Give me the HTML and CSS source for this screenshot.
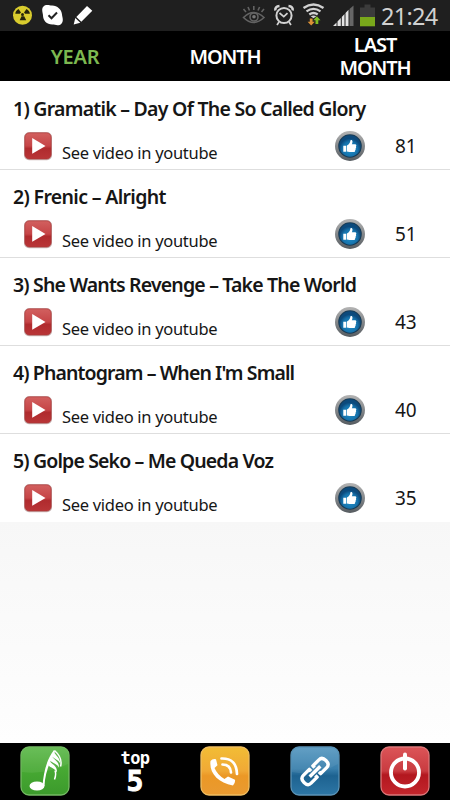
FILE: index.html
```
<!DOCTYPE html>
<html lang="en">
<head>
<meta charset="utf-8">
<title>Top 5</title>
<link rel="stylesheet" href="styles.css">
</head>
<body>
<svg class="defs" width="0" height="0" aria-hidden="true">
  <defs>
    <linearGradient id="red" x2="0" y2="1"><stop offset="0" stop-color="#dc5558"/><stop offset=".5" stop-color="#c93b40"/><stop offset=".58" stop-color="#b3171f"/><stop offset="1" stop-color="#c3262c"/></linearGradient>
    <linearGradient id="play" x2="0" y2="1"><stop offset="0" stop-color="#d2605f"/><stop offset=".5" stop-color="#c64547"/><stop offset=".6" stop-color="#b02b2e"/><stop offset="1" stop-color="#b93537"/></linearGradient>
    <linearGradient id="green" x2="0" y2="1"><stop offset="0" stop-color="#5fb94c"/><stop offset=".5" stop-color="#46a832"/><stop offset="1" stop-color="#3c9a2c"/></linearGradient>
    <linearGradient id="gold" x2="0" y2="1"><stop offset="0" stop-color="#f2bd35"/><stop offset=".5" stop-color="#f0a936"/><stop offset=".6" stop-color="#eb9826"/><stop offset="1" stop-color="#e99a31"/></linearGradient>
    <linearGradient id="blue" x2="0" y2="1"><stop offset="0" stop-color="#5799c1"/><stop offset=".45" stop-color="#397fac"/><stop offset=".6" stop-color="#1d6290"/><stop offset="1" stop-color="#2d76a5"/></linearGradient>
    <linearGradient id="ring" x2="0" y2="1"><stop offset="0" stop-color="#b4b4b4"/><stop offset="1" stop-color="#555b60"/></linearGradient>
    <radialGradient id="disc" cy=".65"><stop offset="0" stop-color="#2090cb"/><stop offset=".7" stop-color="#1672ab"/><stop offset="1" stop-color="#0c4a7c"/></radialGradient>
    <symbol id="i-play" viewBox="0 0 30 30">
      <rect x="1" y="1.2" width="28" height="28" rx="5" fill="#b8a09f" opacity=".75"/>
      <rect x="1.8" y="1.8" width="26.4" height="26.2" rx="4.5" fill="url(#play)" stroke="#a93a3a" stroke-width=".7"/>
      <path d="M9.2 7v15.8L22.5 15z" fill="#fff"/>
    </symbol>
    <symbol id="i-like" viewBox="0 0 30 30">
      <circle cx="15" cy="15" r="15" fill="url(#ring)"/>
      <circle cx="15" cy="15" r="11.8" fill="#173b55"/>
      <circle cx="15" cy="15" r="10.700" fill="url(#disc)"/>
      <path d="M8.300 14.800h2.900v6H8.300zM11.900 14.600c2-1.100 3.200-2.600 3.500-5.100.8-.9 2.200-.2 2.100 1.200 0 1-.4 1.900-.7 2.600h3.200c1.700.2 1.500 1.700.9 2.200.5.7.3 1.600-.3 2 .3.800 0 1.500-.5 1.900.1 1-.5 1.500-1.500 1.500h-4.200l-2.500-.5z" fill="#fff"/>
    </symbol>
  </defs>
</svg>
<div class="screen">
  <header class="status">
    <svg class="status-left" width="100" height="31" viewBox="0 0 100 31">
      <circle cx="22.500" cy="15.200" r="9.500" fill="#d9cc2e"/>
      <g fill="#25240c"><circle cx="22.500" cy="14.500" r="1.500"/><path d="M21 12.500l-2.500-3.500c-2 1-3 2.700-3.200 4.800h4.500zM24 12.500l2.500-3.500c2 1 3.200 2.700 3.400 4.800h-4.800zM21.500 16.200l-1.800 4h6.500l-2-4z"/></g>
      <path d="M42.200 10c0-3 2-5 5-5 2.200 0 2.700.5 5 .5 5 0 9.500 4 9.800 9 .1 2 .8 3 .8 5.300 0 3.500-2 5.500-5.300 5.500-2 0-3-.7-5.200-.7-5.500 0-9.300-4-9.300-9 0-2-.8-3.400-.8-5.600z" fill="#fff"/>
      <path d="M48.500 15.200l3 3 5.500-5.700" fill="none" stroke="#222" stroke-width="2"/>
      <path d="M87 6l5.300 4.800-11 11-5-4.800zM75.300 18l5 4.700-6.600 1.900z" fill="#fff"/>
    </svg>
    <svg class="status-right" width="140" height="31" viewBox="240 0 140 31">
      <g fill="none" stroke="#636363" stroke-width="1.600"><path d="M243.500 17.500q10-10 20.500 0-10.500 10-20.500 0z"/><circle cx="254" cy="17" r="4"/><path d="M253.800 10V6M246 12l-2.500-3M249.500 10.500L248 7M258 10.500l1.600-3.500M261.500 12l2.500-3"/></g>
      <circle cx="254" cy="16.800" r="1.800" fill="#777"/>
      <g fill="none" stroke="#d2d2d2" stroke-width="2"><circle cx="284" cy="15.500" r="7.600"/><path d="M279.500 13l4.300 3.700 3.700-3.500M279 22l-2 3M289 22l2 3" stroke-width="1.700"/><path d="M275.300 10.500q-.5-4 4.200-4.500M292.700 10.500q.5-4-4.200-4.500" stroke-width="2.500"/></g>
      <g fill="none" stroke="#d0d0d0" stroke-width="2.300"><path d="M303.500 8q10-7 20 0M306.500 11.400q7-5 14 0M309.300 14.500q4.200-3 8.400 0"/></g>
      <path d="M310.700 16.200q2.800-1.500 5.600 0l-2.800 2z" fill="#d0d0d0"/>
      <path d="M309.800 18.500v3.200h-2.200l3.600 3.800 3.600-3.800h-2.200v-3.200z" fill="#dc9136"/><path d="M315.500 24v-3.700h-2.200l3.600-4 3.600 4h-2.200V24z" fill="#80bd22"/>
      <path d="M333 26l3.500-3.500V26zM337.500 26v-4.500l3.300-3.500v8zM341.800 26V17l2.700-3v12zM345.500 26V13l3-3.200V26z" fill="#e3e3e3"/><path d="M349.500 26V9l4-3.500V26z" fill="#666"/>
      <path d="M360 7.500h4.500v-3h6v3h4.500V17h-15z" fill="#3b3b3b"/><path d="M360 17h15v9.300h-15z" fill="#79a81b"/>
    </svg>
    <span class="clock">21:24</span>
  </header>
  <nav class="tabs"><span class="tab active">YEAR</span><span class="tab">MONTH</span><span class="tab">LAST<br>MONTH</span></nav>
  <main class="list">
    <section class="row"><h2 class="title t1">1) Gramatik – Day Of The So Called Glory</h2><div class="meta"><svg class="play"><use href="#i-play"/></svg><span class="link">See video in youtube</span><svg class="like"><use href="#i-like"/></svg><span class="votes">81</span></div></section>
    <section class="row"><h2 class="title t2">2) Frenic – Alright</h2><div class="meta"><svg class="play"><use href="#i-play"/></svg><span class="link">See video in youtube</span><svg class="like"><use href="#i-like"/></svg><span class="votes">51</span></div></section>
    <section class="row"><h2 class="title t3">3) She Wants Revenge – Take The World</h2><div class="meta"><svg class="play"><use href="#i-play"/></svg><span class="link">See video in youtube</span><svg class="like"><use href="#i-like"/></svg><span class="votes">43</span></div></section>
    <section class="row"><h2 class="title t4">4) Phantogram – When I'm Small</h2><div class="meta"><svg class="play"><use href="#i-play"/></svg><span class="link">See video in youtube</span><svg class="like"><use href="#i-like"/></svg><span class="votes">40</span></div></section>
    <section class="row"><h2 class="title t5">5) Golpe Seko – Me Queda Voz</h2><div class="meta"><svg class="play"><use href="#i-play"/></svg><span class="link">See video in youtube</span><svg class="like"><use href="#i-like"/></svg><span class="votes">35</span></div></section>
  </main>
  <footer class="dock">
    <svg class="tile" viewBox="0 0 50 50"><rect x="1" y="1" width="48" height="48" rx="8" fill="url(#green)" stroke="#74bb63" stroke-width="1.300"/><path d="M2 26Q26 29 48 18V9q0-7-7-7H9Q2 2 2 9z" fill="#fff" opacity=".07"/><g fill="#fff"><ellipse cx="17" cy="40" rx="7.500" ry="4.500"/><path d="M22.500 40C23.500 28 26 14 34 4l1 1.500C29 17 25 28 24.500 40z"/><path d="M33.800 4.500c0 4 6 6 6.500 13-2-4-6-4.500-8.300-7zM31.500 9.500c1.500 4 7.500 5 7.500 12-2-4-7-4.500-9-7zM29.500 14.500c2 4 8 5 7.500 12-2-4-6.500-5-8.500-7z"/></g><path d="M34.500 4.500Q43 12 40.500 20.500M35 24.500q1.500 4-.5 9" fill="none" stroke="#fff" stroke-width="1.500"/></svg>
    <div class="top5"><span class="top">top</span><span class="five">5</span></div>
    <svg class="tile" viewBox="0 0 50 50"><rect x="1" y="1" width="48" height="48" rx="8" fill="url(#gold)" stroke="#efbd60" stroke-width="1.300"/><path d="M10.500 15q2-2.500 5.500-1.700l1.500 6-3 2.700q3 7 10 11l3.500-2.500 7 3.200q.5 3.500-2 5.800C18 37 9 27 10.500 15z" fill="#fff"/><path d="M21.500 12.500q15-.5 15.500 15.500M22.500 18.500q8 0 8.500 8" fill="none" stroke="#fff" stroke-width="2.700" stroke-linecap="round"/></svg>
    <svg class="tile" viewBox="0 0 50 50"><rect x="1" y="1" width="48" height="48" rx="8" fill="url(#blue)" stroke="#5b93b6" stroke-width="1.300"/><path d="M2 26q24 5 46-8V9q0-7-7-7H9Q2 2 2 9z" fill="#fff" opacity=".07"/><g transform="translate(25 25.500) rotate(-45)" fill="none" stroke="#fff" stroke-width="3.400" stroke-linejoin="round"><path d="M-2.500-3V-5.500H-11q-4.500 0-4.500 5.500t4.500 5.500h8.500V3M2.500-3V-5.500H11q4.500 0 4.500 5.500T11 5.500H2.500V3M-7.500 0H7.500"/></g></svg>
    <svg class="tile" viewBox="0 0 50 50"><rect x="1" y="1" width="48" height="48" rx="8" fill="url(#red)" stroke="#dc7779" stroke-width="1.300"/><g fill="none" stroke="#fff"><circle cx="25" cy="26.500" r="14" stroke-width="3.800"/><path d="M25 8.500v14" stroke-width="4" stroke-linecap="round"/></g></svg>
  </footer>
</div>
</body>
</html>
```
FILE: styles.css
```
* { box-sizing: border-box; }
body { margin: 0; font-family: "Noto Sans", sans-serif; color: #161616; }
.defs { display: block; height: 0; }
.screen { width: 450px; height: 800px; display: flex; flex-direction: column; overflow: hidden; background: linear-gradient(#f7f7f7 521px, #fefefe 743px); }
.status { height: 31px; background: #1f1f1f; display: flex; justify-content: space-between; flex: none; }
.status-left { margin-right: auto; }
.clock { width: 70px; padding-left: 1px; font: 23.500px/32px "Noto Sans", sans-serif; color: #d1d1d1; letter-spacing: -.7px; white-space: nowrap; }
.tabs { height: 50px; flex: none; background: #000; display: grid; grid-template-columns: repeat(3, 1fr); align-items: center; }
.tab { color: #fff; font-size: 20px; line-height: 23px; font-weight: 600; text-align: center; letter-spacing: -1.100px; }
.tab.active { color: #7cb850; letter-spacing: -.2px; }
.list { flex: none; background: #fff; padding-top: .6px; }
.row { height: 88.200px; padding: 13px 13px 0; border-bottom: 1px solid #dedede; }
.row:last-child { border-bottom: 0; height: 87.600px; }
.title { margin: 0; font-size: 19.500px; line-height: 28px; font-weight: 600; white-space: nowrap; }
.t1 { letter-spacing: -.750px; }
.t2 { letter-spacing: -.660px; }
.t3 { letter-spacing: -.830px; }
.t4 { letter-spacing: -.900px; }
.t5 { letter-spacing: -.860px; }
.meta { display: flex; padding-left: 9.500px; height: 38px; }
.play, .like { flex: none; width: 30px; height: 30px; margin-top: 8px; }
.link { flex: none; width: 273px; margin-left: 9.500px; padding-top: 18px; font-size: 16.500px; line-height: 24px; letter-spacing: -.300px; }
.votes { flex: none; margin-left: 30px; padding-top: 9px; font-size: 19px; line-height: 28px; }
.dock { height: 57px; flex: none; margin-top: auto; background: #000; display: grid; grid-template-columns: repeat(5, 1fr); justify-items: center; padding-top: 3px; }
.tile { width: 50px; height: 50px; }
.top5 { color: #fff; display: flex; flex-direction: column; align-items: center; font-family: "DejaVu Sans Mono", monospace; font-weight: bold; }
.top { font-size: 17px; line-height: 24px; letter-spacing: -.6px; }
.five { font-size: 28px; line-height: 24px; -webkit-text-stroke: 1px #fff; }
```
